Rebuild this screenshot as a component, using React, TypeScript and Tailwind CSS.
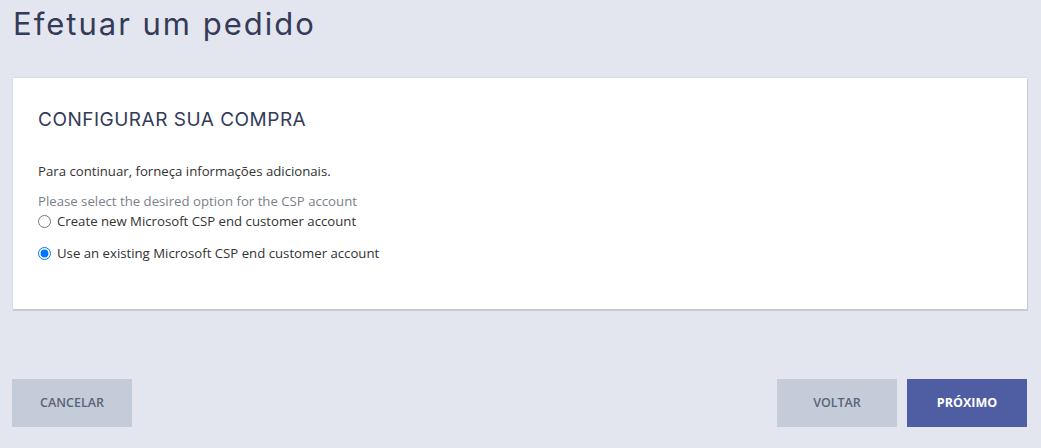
export default function App() {
  return (
    <div className="min-h-[448px] w-[1041px] bg-[#e3e6ee] pt-[4px] font-['Open_Sans',sans-serif]">
      <h1 className="ml-[13px] font-['Inter',sans-serif] text-[31px] leading-[40px] tracking-[2px] text-[#343b58]">
        Efetuar um pedido
      </h1>

      <div className="ml-[12px] mt-[33px] w-[1015px] border-t border-l border-[#d8dce4] bg-white px-[25px] pt-[30px] pb-[47px] shadow-[1px_2px_0_#c5cad3]">
        <h2 className="font-['Inter',sans-serif] text-[19px] leading-[24px] tracking-[0.5px] text-[#343b58]">
          CONFIGURAR SUA COMPRA
        </h2>
        <p className="mt-[30px] text-[13.2px] leading-[18px] text-[#333]">
          Para continuar, forneça informações adicionais.
        </p>
        <p className="mt-[12px] text-[13.2px] leading-[18px] text-[#7b808a]">
          Please select the desired option for the CSP account
        </p>
        <label className="mt-[2px] flex items-center gap-[6px] text-[13.2px] leading-[18px] text-[#333]">
          <input type="radio" name="csp" className="m-0 h-[13px] w-[13px] accent-[#0075ff]" />
          Create new Microsoft CSP end customer account
        </label>
        <label className="mt-[14px] flex items-center gap-[6px] text-[13.2px] leading-[18px] text-[#333]">
          <input type="radio" name="csp" defaultChecked className="m-0 h-[13px] w-[13px] accent-[#0075ff]" />
          Use an existing Microsoft CSP end customer account
        </label>
      </div>

      <div className="ml-[12px] mt-[70px] flex w-[1015px] items-center">
        <button className="h-[48px] w-[120px] bg-[#c5ccd9] text-[12.5px] font-semibold text-[#5a6478]">
          CANCELAR
        </button>
        <div className="ml-auto flex gap-[10px]">
          <button className="h-[48px] w-[120px] bg-[#c5ccd9] text-[12.5px] font-semibold text-[#5a6478]">
            VOLTAR
          </button>
          <button className="h-[48px] w-[120px] bg-[#4f5ea3] text-[12.5px] font-bold text-white">
            PRÓXIMO
          </button>
        </div>
      </div>
    </div>
  );
}
